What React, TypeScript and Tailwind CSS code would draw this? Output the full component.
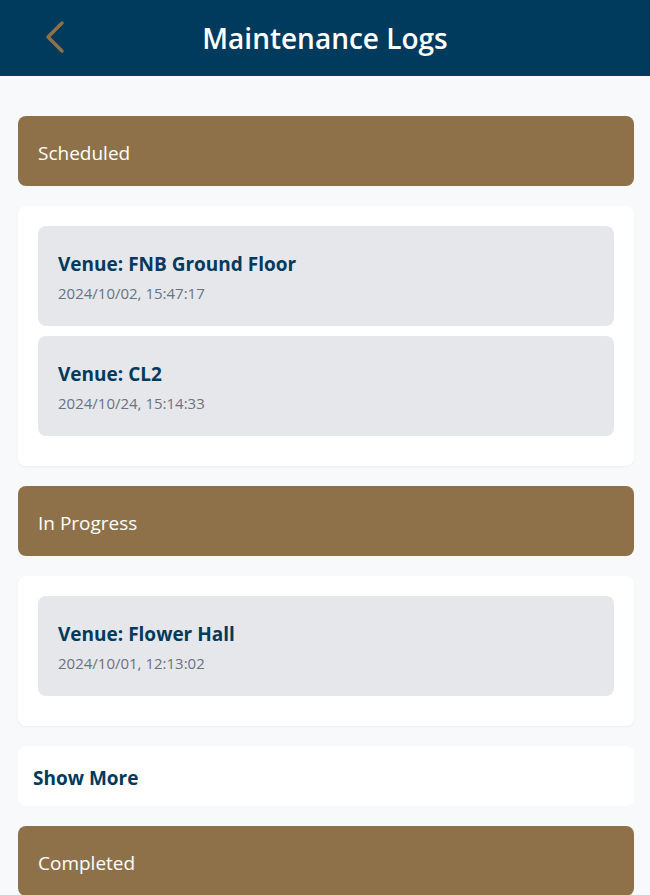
import { FunctionComponent } from "react";

type Log = { venue: string; time: string };

const scheduled: Log[] = [
  { venue: "FNB Ground Floor", time: "2024/10/02, 15:47:17" },
  { venue: "CL2", time: "2024/10/24, 15:14:33" },
];

const inProgress: Log[] = [{ venue: "Flower Hall", time: "2024/10/01, 12:13:02" }];

const SectionHeader: FunctionComponent<{ title: string }> = ({ title }) => (
  <div className="h-[70px] flex items-center px-5 pt-1 rounded-lg bg-[#8f7149] text-white text-[19px]">
    {title}
  </div>
);

const LogList: FunctionComponent<{ logs: Log[] }> = ({ logs }) => (
  <div className="bg-white rounded-lg shadow-[0_1px_3px_rgba(0,0,0,0.05)] px-5 pt-5 pb-[30px] flex flex-col gap-[10px]">
    {logs.map((log) => (
      <div key={log.venue} className="h-[100px] rounded-lg bg-[#e5e7eb] px-5 pt-[3px] flex flex-col justify-center">
        <h3 className="text-[19px] font-bold text-[#003a5c] leading-6">Venue: {log.venue}</h3>
        <p className="text-[15px] text-[#6b7280] mt-[7px] leading-5">{log.time}</p>
      </div>
    ))}
  </div>
);

const App: FunctionComponent = () => {
  return (
    <div className="min-h-[1100px] bg-[#f8f9fb]" style={{ fontFamily: '"Open Sans", "Noto Sans", sans-serif' }}>
      <header className="h-[76px] bg-[#003a5c] relative flex items-center justify-center">
        <button className="absolute left-[42px] top-[20px] text-[#8f7149]">
          <svg width="26" height="34" viewBox="0 0 26 34" fill="none" stroke="currentColor" strokeWidth="3.5" strokeLinecap="round" strokeLinejoin="round">
            <path d="M20 3 L6 17 L20 31" />
          </svg>
        </button>
        <h1 className="text-white text-[28px] font-semibold">Maintenance Logs</h1>
      </header>
      <main className="pl-[18px] pr-[16px] pt-10 flex flex-col gap-5">
        <SectionHeader title="Scheduled" />
        <LogList logs={scheduled} />
        <SectionHeader title="In Progress" />
        <LogList logs={inProgress} />
        <div className="h-[60px] bg-white rounded-lg flex items-center px-[15px] pt-1 text-[19px] font-bold text-[#003a5c]">
          Show More
        </div>
        <SectionHeader title="Completed" />
      </main>
    </div>
  );
};

export default App;
